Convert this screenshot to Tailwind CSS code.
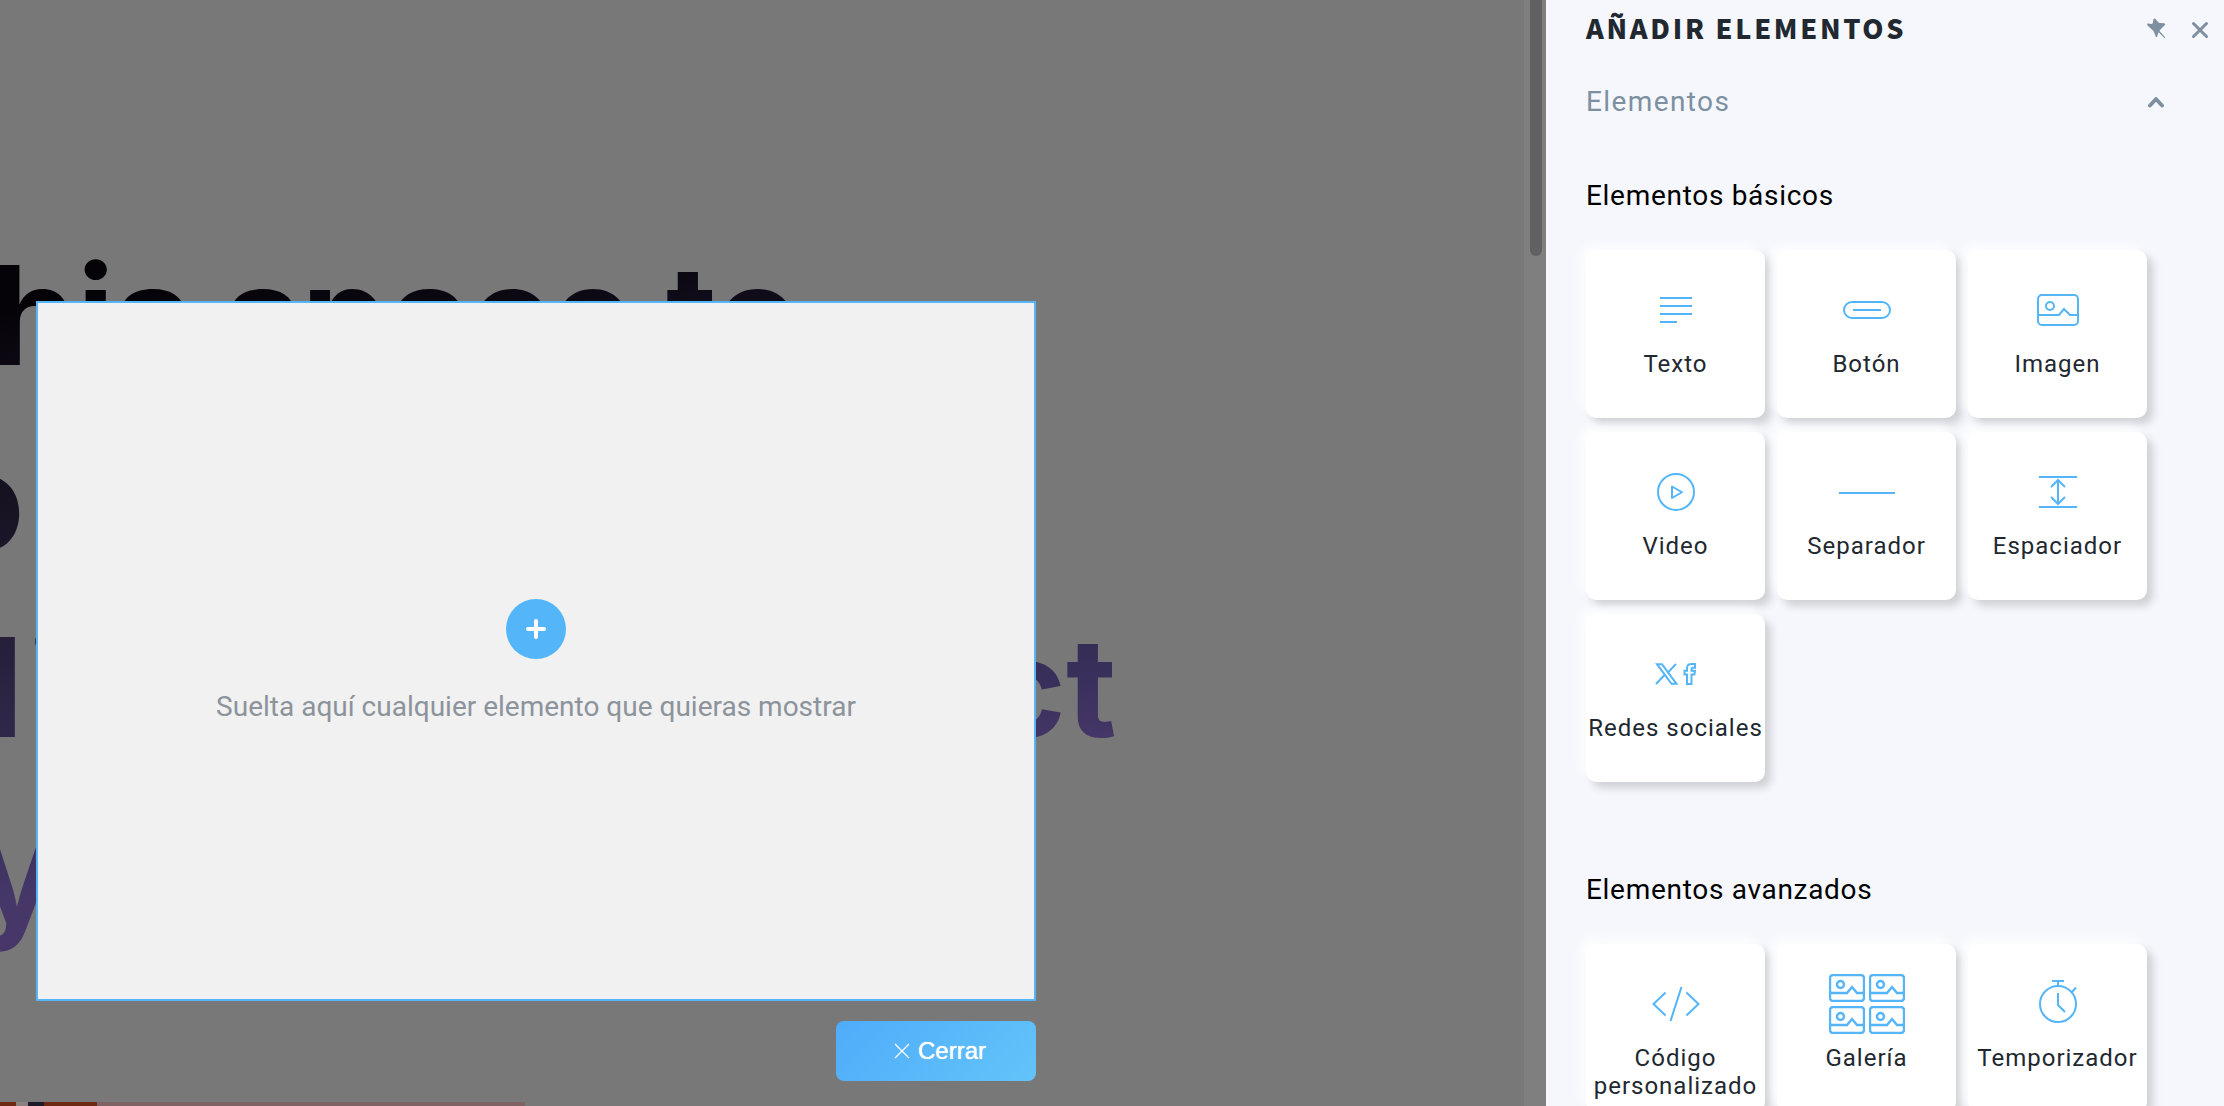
<!DOCTYPE html>
<html lang="es">
<head>
<meta charset="utf-8">
<title>Añadir elementos</title>
<script src="https://cdn.jsdelivr.net/npm/@tailwindcss/browser@4"></script>
</head>
<body class="flex h-screen overflow-hidden bg-[#787878] font-['Roboto',sans-serif]">

<!-- Page preview, dimmed behind the popup editor -->
<main class="relative flex min-w-0 flex-1 overflow-hidden">
  <div class="flex min-w-0 flex-1 flex-col overflow-hidden">
    <h1 class="mt-[222px] flex flex-col bg-[linear-gradient(172deg,#050307_9%,#0f0b18_18%,#181322_30%,#2b2443_49%,#3a305d_64%,#463768_71%)] bg-clip-text font-['Inter',sans-serif] text-[138px] leading-[186px] font-bold whitespace-nowrap text-transparent">
      <span class="-ml-[9px]">his space to</span>
      <span class="-ml-[60px]">o</span>
      <span class="flex"><span class="-ml-[14px]">l</span><span class="ml-1">i</span><span class="ml-[920px]">ct</span></span>
      <span class="-ml-[24px]">y</span>
    </h1>
    <div class="mt-[136px] flex h-1 w-[525px] shrink-0 bg-[#7f6263]"><span class="w-4 bg-[#6f2913]"></span><span class="w-3 bg-[#8b8280]"></span><span class="w-4 bg-[#1f1a2a]"></span><span class="w-[53px] bg-[#6f2913]"></span></div>
  </div>
  <div class="flex w-[22px] justify-center bg-[#7f7f7f] pl-0.5"><div class="h-64 w-3 rounded-b-full bg-[#5f6163]"></div></div>

  <div class="absolute top-[301px] left-9 flex w-[1000px] flex-col items-end gap-5">
    <section class="flex h-[700px] w-full flex-col items-center justify-center gap-7 border-2 border-[#54b5f9] bg-[#f1f1f1] pt-6">
      <button class="flex size-[60px] items-center justify-center rounded-full bg-[#54b5f9]" aria-label="Añadir">
        <svg class="size-5" viewBox="0 0 20 20" stroke="#fff" stroke-width="4" stroke-linecap="round"><path d="M10 2v16M2 10h16"/></svg>
      </button>
      <p class="text-[28px] leading-10 text-[#8c939b]">Suelta aquí cualquier elemento que quieras mostrar</p>
    </section>
    <button class="flex h-[60px] w-[200px] items-center justify-center gap-2 rounded-lg bg-linear-135 from-[#4facfa] to-[#62c4f9] pl-2 font-['Liberation_Sans',sans-serif] text-2xl text-white text-shadow-[0_0_1px_#fff]">
      <svg class="size-4" viewBox="0 0 16 16" stroke="#fff" stroke-width="1.300"><path d="M1 1l14 14M15 1L1 15"/></svg>Cerrar
    </button>
  </div>
</main>

<aside class="w-[678px] shrink-0 overflow-hidden bg-[#f5f7fc] pl-10">
  <header class="flex h-14 items-center pr-3.5">
    <h2 class="flex-1 font-['Noto_Sans_CJK_SC',sans-serif] text-[27px] leading-10 font-black tracking-widest text-[#212830]">AÑADIR ELEMENTOS</h2>
    <button aria-label="Fijar" class="mr-6"><svg class="size-5" viewBox="0 0 20 20" fill="#7d8fa0"><path d="M7.500 1L9 .500l3.500 4c2 .700 4 .500 6 .800l.800 1.200-5.300 5.500-.500 1 5.700 6.300-.700.600-6-5.600c-.700 1.300-.700 3.200-1.500 4.700h-1L7.500 13l-6-5.500L1 5.500l5 .500c.800-.500 1-1.500 1-2.500z"/></svg></button>
    <button aria-label="Cerrar panel"><svg class="mt-1 size-5" viewBox="0 0 20 20" stroke="#7d8fa0" stroke-width="3" stroke-linecap="round"><path d="M3.500 3.500l13 13M16.500 3.500l-13 13"/></svg></button>
  </header>
  <div class="mt-6 flex items-center justify-between pr-[58px]">
    <h3 class="text-[28px] leading-11 tracking-wider text-[#7d8fa0]">Elementos</h3>
    <button aria-label="Plegar"><svg class="h-3 w-5" viewBox="0 0 20 12" fill="none" stroke="#7d8fa0" stroke-width="3.800" stroke-linecap="round" stroke-linejoin="round"><path d="M4 9.500l6-6.500 6 6.500"/></svg></button>
  </div>

  <h4 class="mt-[50px] text-[28px] leading-11 tracking-wide text-black">Elementos básicos</h4>
  <div class="mt-8 grid grid-cols-[repeat(3,179px)] gap-x-3 gap-y-3.5 text-2xl leading-7 tracking-[1px] text-[#212830]">
    <button class="flex h-[168px] flex-col items-center rounded-[10px] bg-white pt-5 shadow-[6px_6px_8px_#00000028,-6px_-6px_10px_#ffffffcc]">
      <span class="flex h-20 items-center"><svg class="size-8" viewBox="0 0 32 32" stroke="#54b5f9" stroke-width="2"><path d="M0 4h32M0 12h32M0 20h32M0 28h17"/></svg></span>Texto
    </button>
    <button class="flex h-[168px] flex-col items-center rounded-[10px] bg-white pt-5 shadow-[6px_6px_8px_#00000028,-6px_-6px_10px_#ffffffcc]">
      <span class="flex h-20 items-center"><svg class="h-[18px] w-12" viewBox="0 0 48 18" fill="none" stroke="#54b5f9" stroke-width="2"><rect x="1" y="1" width="46" height="16" rx="8"/><path d="M10 9h28"/></svg></span>Botón
    </button>
    <button class="flex h-[168px] flex-col items-center rounded-[10px] bg-white pt-5 shadow-[6px_6px_8px_#00000028,-6px_-6px_10px_#ffffffcc]">
      <span class="flex h-20 items-center"><svg class="h-8 w-[42px]" viewBox="0 0 42 32" fill="none" stroke="#54b5f9" stroke-width="2"><rect x="1" y="1" width="40" height="30" rx="4"/><circle cx="13" cy="12" r="4"/><path d="M1 21h21l5-6 6 6h8"/></svg></span>Imagen
    </button>
    <button class="flex h-[168px] flex-col items-center rounded-[10px] bg-white pt-5 shadow-[6px_6px_8px_#00000028,-6px_-6px_10px_#ffffffcc]">
      <span class="flex h-20 items-center"><svg class="size-[38px]" viewBox="0 0 38 38" fill="none" stroke="#54b5f9" stroke-width="2" stroke-linejoin="round"><circle cx="19" cy="19" r="18"/><path d="M15 13.500v11.500l10-5.750z"/></svg></span>Video
    </button>
    <button class="flex h-[168px] flex-col items-center rounded-[10px] bg-white pt-5 shadow-[6px_6px_8px_#00000028,-6px_-6px_10px_#ffffffcc]">
      <span class="flex h-20 items-center"><svg class="h-2 w-14" viewBox="0 0 56 8" stroke="#54b5f9" stroke-width="2"><path d="M0 5h56"/></svg></span>Separador
    </button>
    <button class="flex h-[168px] flex-col items-center rounded-[10px] bg-white pt-5 shadow-[6px_6px_8px_#00000028,-6px_-6px_10px_#ffffffcc]">
      <span class="flex h-20 items-center"><svg class="h-8 w-[38px]" viewBox="0 0 38 32" fill="none" stroke="#54b5f9" stroke-width="2"><path d="M0 1h38M0 31h38M19 4v24M12 11l7-7 7 7M12 21l7 7 7-7"/></svg></span>Espaciador
    </button>
    <button class="flex h-[168px] flex-col items-center rounded-[10px] bg-white pt-5 whitespace-nowrap shadow-[6px_6px_8px_#00000028,-6px_-6px_10px_#ffffffcc]">
      <span class="flex h-20 items-center"><svg class="h-[22px] w-[42px]" viewBox="0 0 42 22" fill="none" stroke="#54b5f9" stroke-width="2"><path d="M2 1.200h5L21.500 20.800h-5zM21 1l-8.800 9.200M1 21l9-9.500"/><path d="M32 21v-9.500h-2.500V7.700H32V5.500C32 2.200 33.500 1 36.500 1H40v3.800h-2c-1.200 0-1.500.500-1.500 1.500v1.400H40l-.600 3.800h-2.900V21z"/></svg></span>Redes sociales
    </button>
  </div>

  <h4 class="mt-[86px] text-[28px] leading-11 tracking-wide text-black">Elementos avanzados</h4>
  <div class="mt-8 grid grid-cols-[repeat(3,179px)] gap-x-3 gap-y-3.5 text-2xl leading-7 tracking-[1px] text-[#212830]">
    <button class="flex h-[168px] flex-col items-center rounded-[10px] bg-white pt-5 shadow-[6px_6px_8px_#00000028,-6px_-6px_10px_#ffffffcc]">
      <span class="flex h-20 items-center"><svg class="h-[34px] w-12" viewBox="0 0 48 34" fill="none" stroke="#54b5f9" stroke-width="2"><path d="M13.500 5.500L1.500 17l12 11.500M34.500 5.500l12 11.500-12 11.500M29.500 0l-11 34"/></svg></span>Código personalizado
    </button>
    <button class="flex h-[168px] flex-col items-center rounded-[10px] bg-white pt-5 shadow-[6px_6px_8px_#00000028,-6px_-6px_10px_#ffffffcc]">
      <span class="grid h-20 grid-cols-2 content-center gap-1"><svg class="h-7 w-9" viewBox="0 0 36 28" fill="none" stroke="#54b5f9" stroke-width="2.400"><rect x="1" y="1" width="34" height="26" rx="3"/><circle cx="11.500" cy="10.500" r="3.500"/><path d="M1 19h17l5-6 5 6h7"/></svg><svg class="h-7 w-9" viewBox="0 0 36 28" fill="none" stroke="#54b5f9" stroke-width="2.400"><rect x="1" y="1" width="34" height="26" rx="3"/><circle cx="11.500" cy="10.500" r="3.500"/><path d="M1 19h17l5-6 5 6h7"/></svg><svg class="h-7 w-9" viewBox="0 0 36 28" fill="none" stroke="#54b5f9" stroke-width="2.400"><rect x="1" y="1" width="34" height="26" rx="3"/><circle cx="11.500" cy="10.500" r="3.500"/><path d="M1 19h17l5-6 5 6h7"/></svg><svg class="h-7 w-9" viewBox="0 0 36 28" fill="none" stroke="#54b5f9" stroke-width="2.400"><rect x="1" y="1" width="34" height="26" rx="3"/><circle cx="11.500" cy="10.500" r="3.500"/><path d="M1 19h17l5-6 5 6h7"/></svg></span>Galería
    </button>
    <button class="flex h-[168px] flex-col items-center rounded-[10px] bg-white pt-5 shadow-[6px_6px_8px_#00000028,-6px_-6px_10px_#ffffffcc]">
      <span class="flex h-20 items-center"><svg class="h-12 w-10" viewBox="0 0 40 48" fill="none" stroke="#54b5f9" stroke-width="2"><circle cx="20" cy="24" r="18"/><path d="M14 1h12M20 1v5M34 12l4-4.500M20 13v12l7 7"/></svg></span>Temporizador
    </button>
  </div>
</aside>
</body>
</html>
